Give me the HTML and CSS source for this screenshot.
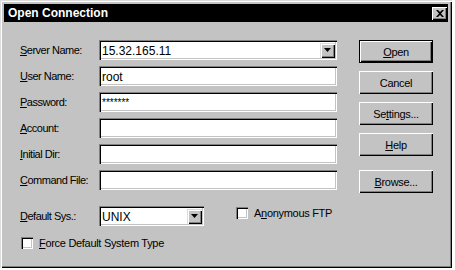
FILE: index.html
```html
<!DOCTYPE html>
<html lang="en">
<head>
    <meta charset="UTF-8">
    <title>Open Connection</title>
    <link rel="stylesheet" href="styles.css">
</head>
<body>
    <div class="dialog">
        <div class="titlebar">
            <span class="title">Open Connection</span>
            <span class="close-btn">
                <svg width="8" height="7" viewBox="0 0 8 7"><path d="M0 0h2l2 2 2-2h2L5 3.5 8 7H6L4 5 2 7H0l3-3.5z" fill="#000"/></svg>
            </span>
        </div>
        <div class="body">
            <div class="form">
                <div class="fields">
                    <label><u>S</u>erver Name:</label>
                    <div class="combo wide">
                        <span class="value">15.32.165.11</span>
                        <span class="drop"><svg width="7" height="4" viewBox="0 0 7 4"><path d="M0 0h7L3.5 4z" fill="#000"/></svg></span>
                    </div>
                    <label><u>U</u>ser Name:</label>
                    <div class="field"><span class="value">root</span></div>
                    <label><u>P</u>assword:</label>
                    <div class="field"><span class="value pw">*******</span></div>
                    <label><u>A</u>ccount:</label>
                    <div class="field"></div>
                    <label><u>I</u>nitial Dir:</label>
                    <div class="field"></div>
                    <label><u>C</u>ommand File:</label>
                    <div class="field"></div>
                </div>
                <div class="sys-row">
                    <label><u>D</u>efault Sys.:</label>
                    <div class="combo small">
                        <span class="value">UNIX</span>
                        <span class="drop"><svg width="7" height="4" viewBox="0 0 7 4"><path d="M0 0h7L3.5 4z" fill="#000"/></svg></span>
                    </div>
                    <div class="check anon"><span class="box"></span>A<u>n</u>onymous FTP</div>
                </div>
                <div class="check force"><span class="box"></span><u>F</u>orce Default System Type</div>
            </div>
            <div class="buttons">
                <div class="btn default"><span><u>O</u>pen</span></div>
                <div class="btn">Cancel</div>
                <div class="btn">Se<u>t</u>tings...</div>
                <div class="btn"><u>H</u>elp</div>
                <div class="btn browse"><u>B</u>rowse...</div>
            </div>
        </div>
    </div>
</body>
</html>
```

FILE: styles.css
```css
body {
    margin: 0;
    background-color: #ffffff;
    font-family: "Liberation Sans", Arial, sans-serif;
    font-size: 11px;
    color: #000000;
}
.dialog {
    width: 452px;
    height: 268px;
    box-sizing: border-box;
    padding: 4px 4px 0 4px;
    background-color: #c3c3c3;
    box-shadow: inset 1px 1px 0 #dcdcdc, inset 2px 2px 0 #ffffff, inset -1px -1px 0 #000000, inset -2px -2px 0 #808080;
}
.titlebar {
    height: 18px;
    background-color: #000000;
    display: flex;
    align-items: center;
    justify-content: space-between;
    padding-left: 4px;
}
.title {
    color: #ffffff;
    font-weight: bold;
    font-size: 12px;
}
.close-btn {
    width: 15px;
    height: 13px;
    margin-right: 1px;
    background-color: #c3c3c3;
    display: flex;
    align-items: center;
    justify-content: center;
    box-shadow: inset 1px 1px 0 #ffffff, inset -1px -1px 0 #000000, inset -2px -2px 0 #808080;
}
.body {
    display: flex;
    padding: 18px 0 0 16px;
}
.form {
    width: 317px;
}
.fields {
    display: grid;
    grid-template-columns: 79px 238px;
    grid-auto-rows: 20px;
    row-gap: 6px;
    align-items: center;
}
label {
    letter-spacing: -0.5px;
}
.field, .combo {
    height: 20px;
    box-sizing: border-box;
    background-color: #ffffff;
    display: flex;
    align-items: center;
    padding-left: 3px;
    box-shadow: inset 1px 1px 0 #808080, inset 2px 2px 0 #000000, inset -1px -1px 0 #ffffff, inset -2px -2px 0 #c3c3c3;
}
.value {
    font-size: 12px;
    padding-top: 1px;
}
.value.pw {
    font-size: 10px;
}
.combo {
    justify-content: space-between;
    padding-right: 2px;
}
.combo.small {
    width: 105px;
}
.drop {
    width: 15px;
    height: 15px;
    background-color: #c3c3c3;
    display: flex;
    align-items: center;
    justify-content: center;
    box-shadow: inset 1px 1px 0 #dcdcdc, inset 2px 2px 0 #ffffff, inset -1px -1px 0 #000000, inset -2px -2px 0 #808080;
}
.sys-row {
    display: flex;
    align-items: center;
    margin-top: 16px;
    height: 20px;
}
.sys-row label {
    width: 79px;
}
.check {
    display: flex;
    align-items: center;
    letter-spacing: -0.3px;
}
.box {
    width: 12px;
    height: 12px;
    box-sizing: border-box;
    background-color: #ffffff;
    margin-right: 6px;
    box-shadow: inset 1px 1px 0 #808080, inset 2px 2px 0 #000000, inset -1px -1px 0 #ffffff, inset -2px -2px 0 #c3c3c3;
}
.anon {
    margin-left: 32px;
    margin-top: -6px;
}
.force {
    margin-top: 11px;
    margin-left: 1px;
}
.buttons {
    display: flex;
    flex-direction: column;
    gap: 8px;
    margin-left: 22px;
}
.btn {
    width: 74px;
    height: 23px;
    box-sizing: border-box;
    display: flex;
    align-items: center;
    justify-content: center;
    letter-spacing: -0.3px;
    box-shadow: inset 1px 1px 0 #ffffff, inset -1px -1px 0 #000000, inset -2px -2px 0 #808080;
}
.btn.default {
    border: 1px solid #000000;
}
.btn.default span {
    width: 100%;
    height: 100%;
    display: flex;
    align-items: center;
    justify-content: center;
    box-shadow: inset 1px 1px 0 #ffffff, inset -1px -1px 0 #000000, inset -2px -2px 0 #808080;
}
.btn.default {
    box-shadow: none;
}
.browse {
    margin-top: 6px;
}
```
